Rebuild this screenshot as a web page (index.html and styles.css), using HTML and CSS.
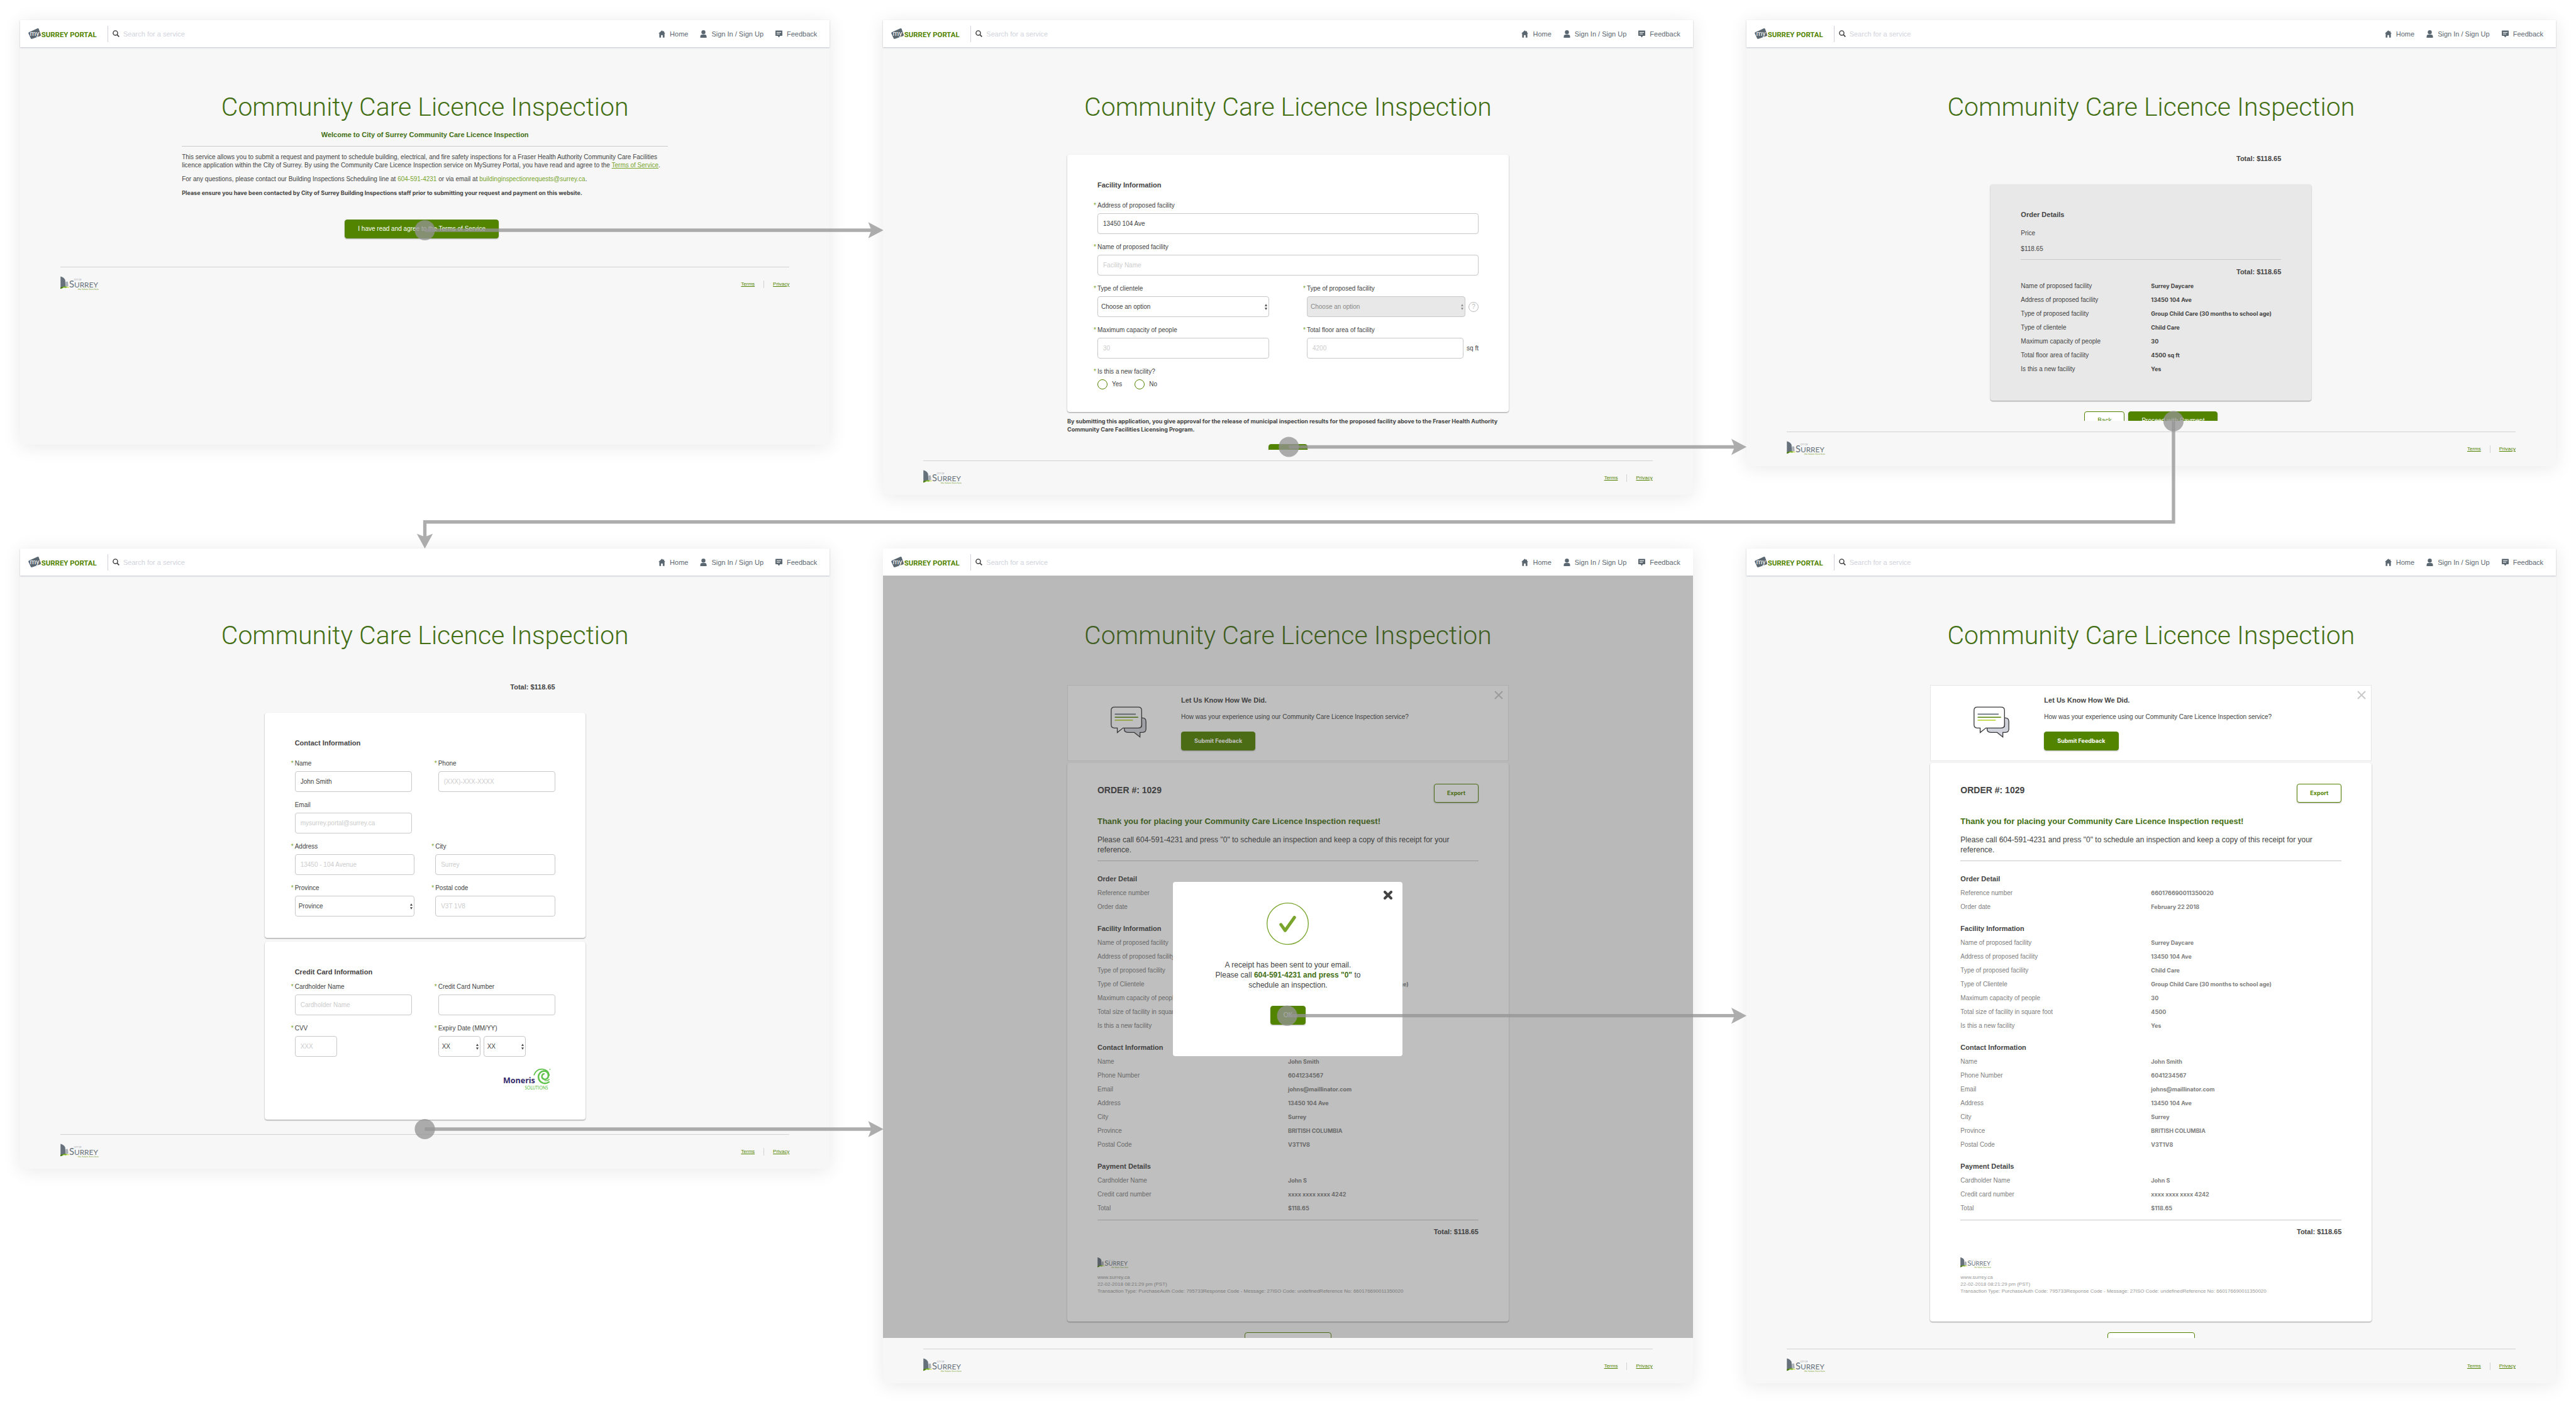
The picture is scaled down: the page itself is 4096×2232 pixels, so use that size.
FILE: index.html
```html
<!DOCTYPE html>
<html lang="en">
<head>
<meta charset="utf-8">
<title>Community Care Licence Inspection – user flow</title>
<link rel="stylesheet" href="styles.css">
</head>
<body>
<svg class="sprite" aria-hidden="true">
  <symbol id="i-portal" viewBox="0 0 492 76">
    <path fill="#5b6770" d="M7 27 64 1q8-3 11 5l14 40q2 6-4 9L27 75q-7 2-10-5L1 36q-2-6 6-9z"/>
    <text x="11" y="54" font-family="Roboto, sans-serif" font-size="50" fill="#fff">my</text>
    <text x="93" y="61" font-family="Roboto, sans-serif" font-weight="700" font-size="51" fill="#528400">SURREY PORTAL</text>
  </symbol>
  <symbol id="i-surrey" viewBox="0 0 272 104">
    <path fill="#66717b" d="M1 1q24 6 33 24l3 48-36 12z"/>
    <path fill="#aab0b5" d="M37 38h16l4 32-20 4z"/>
    <path fill="#4c7d10" d="M0 80q9-7 20-5-1 10-20 14z"/>
    <path fill="#7ab51d" d="M18 74q20-6 29 2l-8 6q-12-5-24 0z"/>
    <path fill="#c4d82e" d="M45 74q12-1 19 5-11 2-20 0z"/>
    <text x="97" y="29" font-family="Lato, sans-serif" font-size="14" fill="#9aa1a7">CITY OF</text>
    <text x="62" y="77" font-family="Lato, sans-serif" font-size="53" fill="#66717b"><tspan font-size="66">S</tspan>URREY</text>
    <text x="124" y="98" font-family="Lato, sans-serif" font-size="17" fill="#7aa52f">the future lives here.</text>
  </symbol>
  <symbol id="i-search" viewBox="0 0 16 16">
    <circle cx="6.5" cy="6.5" r="5.2" fill="none" stroke="#333" stroke-width="2"/>
    <path d="m10.5 10.5 4.5 4.5" stroke="#333" stroke-width="2.4"/>
  </symbol>
  <symbol id="i-home" viewBox="0 0 16 17"><path fill="#5b6770" d="M8 0 0 7.500h2V16q0 1 1 1h3v-5q0-1 1-1h2q1 0 1 1v5h3q1 0 1-1V7.500h2L13 4.500V2h-2v1z"/></symbol>
  <symbol id="i-user" viewBox="0 0 16 18"><circle cx="8" cy="4.800" r="4.800" fill="#5b6770"/><path fill="#5b6770" d="M.5 18v-3q0-4.500 4.500-4.500h6q4.500 0 4.500 4.500v3z"/></symbol>
  <symbol id="i-feedback" viewBox="0 0 17 17"><path fill="#5b6770" d="M1 0h15q1 0 1 1v11q0 1-1 1h-4.500l-3 4-3-4H1q-1 0-1-1V1q0-1 1-1z"/><path stroke="#fff" stroke-width="1.600" d="M3 4.500h11M3 8.500h8"/></symbol>
  <symbol id="i-updown" viewBox="0 0 6 14"><path fill="currentColor" d="M3 0 6 5H0zM3 14 0 9h6z"/></symbol>
  <symbol id="i-chat" viewBox="0 0 256 226">
    <path fill="#d0d3dc" stroke="#3a3a3a" stroke-width="6" d="M222 82q31 0 31 26v54q0 25-25 25h-18v33l-41-33h-46q-26 0-26-24v-10h106q20 0 20-21z"/>
    <path fill="#fff" stroke="#3a3a3a" stroke-width="6" d="M26 5h172q24 0 24 24v102q0 24-24 24H88l-41 33v-33H26q-23 0-23-24V29Q3 5 26 5z"/>
    <path stroke="#66717b" stroke-width="7" d="M29 56h151"/><path stroke="#528400" stroke-width="7" d="M29 78h168"/><path stroke="#b9d12b" stroke-width="7" d="M29 99h130"/>
  </symbol>
  <symbol id="i-moneris" viewBox="0 0 340 150">
    <text x="0" y="108" font-family="Open Sans, sans-serif" font-weight="700" font-size="56" fill="#342a6b">Moneris</text>
    <text x="154" y="149" font-family="Lato, sans-serif" font-size="30" fill="#5fc24a">SOLUTIONS</text>
    <g fill="none" stroke="#5fc24a" stroke-linecap="round">
      <path stroke-width="8" d="M220 47Q236 4 280 6q44 5 48 45"/>
      <path stroke-width="11" d="M326 98q-20 15-44 7-30-12-31-44 4-38 40-42 30 2 31 34-2 22-22 26-20-1-24-17-1-18 14-22"/>
      <path stroke-width="6" d="M328 80q-14 12-32 8M332 8h2"/>
    </g>
  </symbol>
</svg>

<main class="board">

  <!-- Step 1: terms -->
  <section class="screen screen-intro">
    <header class="topbar">
      <svg class="brand" role="img" aria-label="mySurrey Portal"><use href="#i-portal"/></svg>
      <div class="search"><svg><use href="#i-search"/></svg><input type="search" aria-label="Search" placeholder="Search for a service"></div>
      <nav class="nav"><a href="#"><svg><use href="#i-home"/></svg>Home</a><a href="#"><svg><use href="#i-user"/></svg>Sign In / Sign Up</a><a href="#"><svg><use href="#i-feedback"/></svg>Feedback</a></nav>
    </header>
    <div class="content">
      <h1>Community Care Licence Inspection</h1>
      <div class="intro">
        <h2>Welcome to City of Surrey Community Care Licence Inspection</h2>
        <p>This service allows you to submit a request and payment to schedule building, electrical, and fire safety inspections for a Fraser Health Authority Community Care Facilities licence application within the City of Surrey. By using the Community Care Licence Inspection service on MySurrey Portal, you have read and agree to the <a class="underlined" href="#">Terms of Service</a>.</p>
        <p>For any questions, please contact our Building Inspections Scheduling line at <a href="#">604-591-4231</a> or via email at <a href="#">buildinginspectionrequests@surrey.ca</a>.</p>
        <p><strong>Please ensure you have been contacted by City of Surrey Building Inspections staff prior to submitting your request and payment on this website.</strong></p>
      </div>
      <div class="actions actions-intro"><button class="btn" type="button">I have read and agree to the Terms of Service</button></div>
    </div>
    <footer class="foot"><svg class="city" role="img" aria-label="City of Surrey"><use href="#i-surrey"/></svg><div class="legal"><a href="#">Terms</a><a href="#">Privacy</a></div></footer>
  </section>

  <!-- Step 2: facility form -->
  <section class="screen">
    <header class="topbar">
      <svg class="brand" role="img" aria-label="mySurrey Portal"><use href="#i-portal"/></svg>
      <div class="search"><svg><use href="#i-search"/></svg><input type="search" aria-label="Search" placeholder="Search for a service"></div>
      <nav class="nav"><a href="#"><svg><use href="#i-home"/></svg>Home</a><a href="#"><svg><use href="#i-user"/></svg>Sign In / Sign Up</a><a href="#"><svg><use href="#i-feedback"/></svg>Feedback</a></nav>
    </header>
    <div class="content content-facility">
      <h1>Community Care Licence Inspection</h1>
      <form class="wide form-top">
        <div class="card card-facility">
          <h3>Facility Information</h3>
          <div class="fields">
            <div class="field span"><label class="req" for="f-address">Address of proposed facility</label><input id="f-address" type="text" value="13450 104 Ave"></div>
            <div class="field span"><label class="req" for="f-name">Name of proposed facility</label><input id="f-name" type="text" placeholder="Facility Name"></div>
            <div class="field"><label class="req" for="f-client">Type of clientele</label><div class="pick"><select id="f-client"><option>Choose an option</option></select><svg><use href="#i-updown"/></svg></div></div>
            <div class="field"><label class="req" for="f-type">Type of proposed facility</label><div class="inline"><div class="pick off"><select id="f-type" disabled><option>Choose an option</option></select><svg><use href="#i-updown"/></svg></div><button class="help" type="button">?</button></div></div>
            <div class="field"><label class="req" for="f-cap">Maximum capacity of people</label><input id="f-cap" type="text" placeholder="30"></div>
            <div class="field"><label class="req" for="f-area">Total floor area of facility</label><div class="inline"><input id="f-area" type="text" placeholder="4200"><span class="unit">sq ft</span></div></div>
            <fieldset class="field span"><legend class="req">Is this a new facility?</legend><div class="radios"><label><input type="radio" name="new">Yes</label><label><input type="radio" name="new">No</label></div></fieldset>
          </div>
        </div>
        <p class="consent">By submitting this application, you give approval for the release of municipal inspection results for the proposed facility above to the Fraser Health Authority Community Care Facilities Licensing Program.</p>
        <div class="actions"><button class="btn" type="button">Next</button></div>
      </form>
    </div>
    <footer class="foot"><svg class="city" role="img" aria-label="City of Surrey"><use href="#i-surrey"/></svg><div class="legal"><a href="#">Terms</a><a href="#">Privacy</a></div></footer>
  </section>

  <!-- Step 3: order review -->
  <section class="screen">
    <header class="topbar">
      <svg class="brand" role="img" aria-label="mySurrey Portal"><use href="#i-portal"/></svg>
      <div class="search"><svg><use href="#i-search"/></svg><input type="search" aria-label="Search" placeholder="Search for a service"></div>
      <nav class="nav"><a href="#"><svg><use href="#i-home"/></svg>Home</a><a href="#"><svg><use href="#i-user"/></svg>Sign In / Sign Up</a><a href="#"><svg><use href="#i-feedback"/></svg>Feedback</a></nav>
    </header>
    <div class="content content-review">
      <h1>Community Care Licence Inspection</h1>
      <div class="narrow">
        <p class="total total-top">Total: $118.65</p>
        <div class="card card-review">
          <h3>Order Details</h3>
          <p class="price-label">Price</p>
          <p class="price">$118.65</p>
          <p class="total total-line">Total: $118.65</p>
          <table class="facts">
            <tr><th scope="row">Name of proposed facility</th><td>Surrey Daycare</td></tr>
            <tr><th scope="row">Address of proposed facility</th><td>13450 104 Ave</td></tr>
            <tr><th scope="row">Type of proposed facility</th><td>Group Child Care (30 months to school age)</td></tr>
            <tr><th scope="row">Type of clientele</th><td>Child Care</td></tr>
            <tr><th scope="row">Maximum capacity of people</th><td>30</td></tr>
            <tr><th scope="row">Total floor area of facility</th><td>4500 sq ft</td></tr>
            <tr><th scope="row">Is this a new facility</th><td>Yes</td></tr>
          </table>
        </div>
        <div class="actions"><button class="btn btn-line plain" type="button">Back</button><button class="btn" type="button">Proceed with Payment</button></div>
      </div>
    </div>
    <footer class="foot"><svg class="city" role="img" aria-label="City of Surrey"><use href="#i-surrey"/></svg><div class="legal"><a href="#">Terms</a><a href="#">Privacy</a></div></footer>
  </section>

  <!-- Step 4: payment -->
  <section class="screen">
    <header class="topbar">
      <svg class="brand" role="img" aria-label="mySurrey Portal"><use href="#i-portal"/></svg>
      <div class="search"><svg><use href="#i-search"/></svg><input type="search" aria-label="Search" placeholder="Search for a service"></div>
      <nav class="nav"><a href="#"><svg><use href="#i-home"/></svg>Home</a><a href="#"><svg><use href="#i-user"/></svg>Sign In / Sign Up</a><a href="#"><svg><use href="#i-feedback"/></svg>Feedback</a></nav>
    </header>
    <div class="content content-payment">
      <h1>Community Care Licence Inspection</h1>
      <form class="narrow">
        <p class="total total-top">Total: $118.65</p>
        <div class="card card-contact">
          <h3>Contact Information</h3>
          <div class="fields gap-m">
            <div class="field"><label class="req" for="p-name">Name</label><input id="p-name" type="text" value="John Smith"></div>
            <div class="field"><label class="req" for="p-phone">Phone</label><input id="p-phone" type="tel" placeholder="(XXX)-XXX-XXXX"></div>
            <div class="field"><label for="p-email">Email</label><input id="p-email" type="email" placeholder="mysurrey.portal@surrey.ca"></div>
          </div>
          <div class="fields gap-s">
            <div class="field"><label class="req" for="p-addr">Address</label><input id="p-addr" type="text" placeholder="13450 - 104 Avenue"></div>
            <div class="field"><label class="req" for="p-city">City</label><input id="p-city" type="text" placeholder="Surrey"></div>
            <div class="field"><label class="req" for="p-prov">Province</label><div class="pick"><select id="p-prov"><option>Province</option></select><svg><use href="#i-updown"/></svg></div></div>
            <div class="field"><label class="req" for="p-post">Postal code</label><input id="p-post" type="text" placeholder="V3T 1V8"></div>
          </div>
        </div>
        <div class="card card-credit">
          <h3>Credit Card Information</h3>
          <div class="fields gap-m">
            <div class="field"><label class="req" for="c-name">Cardholder Name</label><input id="c-name" type="text" placeholder="Cardholder Name"></div>
            <div class="field"><label class="req" for="c-num">Credit Card Number</label><input id="c-num" type="text"></div>
            <div class="field"><label class="req" for="c-cvv">CVV</label><input class="short" id="c-cvv" type="text" placeholder="XXX"></div>
            <div class="field"><label class="req" for="c-month">Expiry Date (MM/YY)</label><div class="inline"><div class="pick short"><select id="c-month"><option>XX</option></select><svg><use href="#i-updown"/></svg></div><div class="pick short"><select aria-label="Expiry year"><option>XX</option></select><svg><use href="#i-updown"/></svg></div></div></div>
          </div>
          <svg class="moneris" role="img" aria-label="Moneris Solutions"><use href="#i-moneris"/></svg>
        </div>
      </form>
    </div>
    <footer class="foot"><svg class="city" role="img" aria-label="City of Surrey"><use href="#i-surrey"/></svg><div class="legal"><a href="#">Terms</a><a href="#">Privacy</a></div></footer>
  </section>

  <!-- Step 5: receipt with confirmation dialog -->
  <section class="screen">
    <header class="topbar flat">
      <svg class="brand" role="img" aria-label="mySurrey Portal"><use href="#i-portal"/></svg>
      <div class="search"><svg><use href="#i-search"/></svg><input type="search" aria-label="Search" placeholder="Search for a service"></div>
      <nav class="nav"><a href="#"><svg><use href="#i-home"/></svg>Home</a><a href="#"><svg><use href="#i-user"/></svg>Sign In / Sign Up</a><a href="#"><svg><use href="#i-feedback"/></svg>Feedback</a></nav>
    </header>
    <div class="content content-receipt">
      <h1>Community Care Licence Inspection</h1>
      <div class="wide">
        <aside class="banner">
          <svg class="chat"><use href="#i-chat"/></svg>
          <div><h3>Let Us Know How We Did.</h3><p>How was your experience using our Community Care Licence Inspection service?</p><button class="btn strong" type="button">Submit Feedback</button></div>
          <button class="dismiss" type="button" aria-label="Close"><svg viewBox="0 0 14 14"><path stroke="#c9c9c9" stroke-width="2" d="m1 1 12 12M13 1 1 13"/></svg></button>
        </aside>
        <article class="card receipt">
          <div class="receipt-head"><h2>ORDER #: 1029</h2><button class="btn btn-line strong" type="button">Export</button></div>
          <p class="thanks">Thank you for placing your Community Care Licence Inspection request!</p>
          <p class="note">Please call 604-591-4231 and press "0" to schedule an inspection and keep a copy of this receipt for your reference.</p>
          <h3>Order Detail</h3>
          <table class="facts soft"><tr><th scope="row">Reference number</th><td>660176690011350020</td></tr><tr><th scope="row">Order date</th><td>February 22 2018</td></tr></table>
          <h3>Facility Information</h3>
          <table class="facts soft"><tr><th scope="row">Name of proposed facility</th><td>Surrey Daycare</td></tr><tr><th scope="row">Address of proposed facility</th><td>13450 104 Ave</td></tr><tr><th scope="row">Type of proposed facility</th><td>Child Care</td></tr><tr><th scope="row">Type of Clientele</th><td>Group Child Care (30 months to school age)</td></tr><tr><th scope="row">Maximum capacity of people</th><td>30</td></tr><tr><th scope="row">Total size of facility in square foot</th><td>4500</td></tr><tr><th scope="row">Is this a new facility</th><td>Yes</td></tr></table>
          <h3>Contact Information</h3>
          <table class="facts soft"><tr><th scope="row">Name</th><td>John Smith</td></tr><tr><th scope="row">Phone Number</th><td>6041234567</td></tr><tr><th scope="row">Email</th><td>johns@maillinator.com</td></tr><tr><th scope="row">Address</th><td>13450 104 Ave</td></tr><tr><th scope="row">City</th><td>Surrey</td></tr><tr><th scope="row">Province</th><td>BRITISH COLUMBIA</td></tr><tr><th scope="row">Postal Code</th><td>V3T1V8</td></tr></table>
          <h3>Payment Details</h3>
          <table class="facts soft"><tr><th scope="row">Cardholder Name</th><td>John S</td></tr><tr><th scope="row">Credit card number</th><td>xxxx xxxx xxxx 4242</td></tr><tr><th scope="row">Total</th><td>$118.65</td></tr></table>
          <p class="total total-line">Total: $118.65</p>
          <svg class="city city-small" role="img" aria-label="City of Surrey"><use href="#i-surrey"/></svg>
          <p class="trace">www.surrey.ca<br>22-02-2018 08:21:29 pm (PST)<br>Transaction Type: PurchaseAuth Code: 795733Response Code - Message: 27ISO Code: undefinedReference No: 660176690011350020</p>
        </article>
        <div class="actions"><button class="btn btn-line plain" type="button">Return to Home Page</button></div>
      </div>
      <div class="scrim"></div>
      <div class="dialog" role="dialog" aria-label="Receipt sent">
        <button class="dialog-close" type="button" aria-label="Close"><svg viewBox="0 0 14 14"><path stroke="#444" stroke-width="4" stroke-linecap="round" d="m2 2 10 10M12 2 2 12"/></svg></button>
        <svg class="tick" viewBox="0 0 100 100"><circle cx="50" cy="50" r="49" fill="none" stroke="#79a52d" stroke-width="2"/><path fill="none" stroke="#79a52d" stroke-width="7.500" stroke-linecap="round" stroke-linejoin="round" d="m34 52 10 14 22-31"/></svg>
        <p>A receipt has been sent to your email.<br>Please call <strong>604-591-4231 and press "0"</strong> to<br>schedule an inspection.</p>
        <button class="btn" type="button">OK</button>
      </div>
    </div>
    <footer class="foot"><svg class="city" role="img" aria-label="City of Surrey"><use href="#i-surrey"/></svg><div class="legal"><a href="#">Terms</a><a href="#">Privacy</a></div></footer>
  </section>

  <!-- Step 6: receipt -->
  <section class="screen">
    <header class="topbar">
      <svg class="brand" role="img" aria-label="mySurrey Portal"><use href="#i-portal"/></svg>
      <div class="search"><svg><use href="#i-search"/></svg><input type="search" aria-label="Search" placeholder="Search for a service"></div>
      <nav class="nav"><a href="#"><svg><use href="#i-home"/></svg>Home</a><a href="#"><svg><use href="#i-user"/></svg>Sign In / Sign Up</a><a href="#"><svg><use href="#i-feedback"/></svg>Feedback</a></nav>
    </header>
    <div class="content content-receipt">
      <h1>Community Care Licence Inspection</h1>
      <div class="wide">
        <aside class="banner">
          <svg class="chat"><use href="#i-chat"/></svg>
          <div><h3>Let Us Know How We Did.</h3><p>How was your experience using our Community Care Licence Inspection service?</p><button class="btn strong" type="button">Submit Feedback</button></div>
          <button class="dismiss" type="button" aria-label="Close"><svg viewBox="0 0 14 14"><path stroke="#c9c9c9" stroke-width="2" d="m1 1 12 12M13 1 1 13"/></svg></button>
        </aside>
        <article class="card receipt">
          <div class="receipt-head"><h2>ORDER #: 1029</h2><button class="btn btn-line strong" type="button">Export</button></div>
          <p class="thanks">Thank you for placing your Community Care Licence Inspection request!</p>
          <p class="note">Please call 604-591-4231 and press "0" to schedule an inspection and keep a copy of this receipt for your reference.</p>
          <h3>Order Detail</h3>
          <table class="facts soft"><tr><th scope="row">Reference number</th><td>660176690011350020</td></tr><tr><th scope="row">Order date</th><td>February 22 2018</td></tr></table>
          <h3>Facility Information</h3>
          <table class="facts soft"><tr><th scope="row">Name of proposed facility</th><td>Surrey Daycare</td></tr><tr><th scope="row">Address of proposed facility</th><td>13450 104 Ave</td></tr><tr><th scope="row">Type of proposed facility</th><td>Child Care</td></tr><tr><th scope="row">Type of Clientele</th><td>Group Child Care (30 months to school age)</td></tr><tr><th scope="row">Maximum capacity of people</th><td>30</td></tr><tr><th scope="row">Total size of facility in square foot</th><td>4500</td></tr><tr><th scope="row">Is this a new facility</th><td>Yes</td></tr></table>
          <h3>Contact Information</h3>
          <table class="facts soft"><tr><th scope="row">Name</th><td>John Smith</td></tr><tr><th scope="row">Phone Number</th><td>6041234567</td></tr><tr><th scope="row">Email</th><td>johns@maillinator.com</td></tr><tr><th scope="row">Address</th><td>13450 104 Ave</td></tr><tr><th scope="row">City</th><td>Surrey</td></tr><tr><th scope="row">Province</th><td>BRITISH COLUMBIA</td></tr><tr><th scope="row">Postal Code</th><td>V3T1V8</td></tr></table>
          <h3>Payment Details</h3>
          <table class="facts soft"><tr><th scope="row">Cardholder Name</th><td>John S</td></tr><tr><th scope="row">Credit card number</th><td>xxxx xxxx xxxx 4242</td></tr><tr><th scope="row">Total</th><td>$118.65</td></tr></table>
          <p class="total total-line">Total: $118.65</p>
          <svg class="city city-small" role="img" aria-label="City of Surrey"><use href="#i-surrey"/></svg>
          <p class="trace">www.surrey.ca<br>22-02-2018 08:21:29 pm (PST)<br>Transaction Type: PurchaseAuth Code: 795733Response Code - Message: 27ISO Code: undefinedReference No: 660176690011350020</p>
        </article>
        <div class="actions"><button class="btn btn-line plain" type="button">Return to Home Page</button></div>
      </div>
    </div>
    <footer class="foot"><svg class="city" role="img" aria-label="City of Surrey"><use href="#i-surrey"/></svg><div class="legal"><a href="#">Terms</a><a href="#">Privacy</a></div></footer>
  </section>

  <!-- Connectors between the steps -->
  <svg class="flow" viewBox="0 0 6112 3330" preserveAspectRatio="none" aria-hidden="true">
    <g class="hot"><circle cx="1008" cy="546" r="24"/><circle cx="3058" cy="1060" r="24"/><circle cx="5157" cy="999" r="24"/><circle cx="1008" cy="2678" r="24"/><circle cx="3054" cy="2409" r="24"/></g>
    <g class="wire">
      <path d="M1008 542H2066L2060 527 2096 546 2060 565 2066 550H1008z"/>
      <path d="M3058 1056H4114L4108 1041 4144 1060 4108 1079 4114 1064H3058z"/>
      <path d="M5153 999h8v243H1012v30l15-6-19 35-19-35 15 6v-38H5153z"/>
      <path d="M1008 2674H2066L2060 2659 2096 2678 2060 2697 2066 2682H1008z"/>
      <path d="M3054 2405H4114L4108 2390 4144 2409 4108 2428 4114 2413H3054z"/>
    </g>
  </svg>
</main>
</body>
</html>
```
FILE: styles.css
```css
* { box-sizing: border-box; }

body {
  margin: 0;
  background: #fff;
  color: #444;
  font: 10px/14px "Liberation Sans", Arial, sans-serif;
}

h1, h2, h3, p, fieldset, legend { margin: 0; padding: 0; border: 0; }
button, input, select { font: inherit; color: inherit; }
svg { display: block; }
.sprite { position: absolute; width: 0; height: 0; }

.board {
  position: relative;
  display: grid;
  grid-template-columns: repeat(3, minmax(0, 1fr));
  gap: 85px;
  align-items: start;
  padding: 32px 32px 33px;
}

.screen {
  background: #f7f7f7;
  box-shadow: 0 3px 28px rgba(0, 0, 0, .09);
}
.screen-intro { min-height: 675px; }

/* Top bar */
.topbar {
  position: relative;
  display: flex;
  align-items: center;
  height: 43px;
  padding: 0 20px 0 13px;
  background: #fff;
  box-shadow: 0 1px 2px #bfc3c9;
}
.topbar.flat { box-shadow: none; }
.brand { width: 110px; height: 17px; margin-right: 16px; overflow: visible; }
.search {
  display: flex;
  align-items: center;
  flex: 1;
  gap: 6px;
  height: 26px;
  padding-left: 7px;
  border-left: 1px solid #d0d3dc;
}
.search svg { width: 11px; height: 11px; }
.search input {
  flex: 1;
  min-width: 0;
  padding: 0;
  border: 0;
  background: none;
  font-size: 11px;
}
.search input::placeholder { color: #d0d3dc; opacity: 1; }
.nav { display: flex; gap: 19px; }
.nav a {
  display: flex;
  align-items: center;
  gap: 7px;
  color: #5b6770;
  font-size: 11px;
  text-decoration: none;
}
.nav svg { width: 11px; height: 12px; }

/* Page body */
.content { position: relative; padding-top: 70px; overflow: hidden; }
.content-facility { max-height: 640px; }
.content-review { max-height: 594px; }
.content-payment { padding-bottom: 6px; }
.content-receipt { max-height: 1212px; }

h1 {
  color: #436f14;
  font: 300 41px/50px Roboto, "Liberation Sans", sans-serif;
  text-align: center;
}
h3 { font-size: 11px; line-height: 14px; }

.wide { max-width: 702px; margin: 0 auto; }
.narrow { max-width: 510px; margin: 0 auto; }
.form-top { margin-top: 51px; }

.intro { max-width: 773px; margin: 12px auto 0; font-size: 10px; line-height: 13px; }
.intro h2 {
  margin-bottom: 10px;
  padding-bottom: 11px;
  border-bottom: 1px solid #ccc;
  color: #436f14;
  font-size: 11px;
  line-height: 14px;
  text-align: center;
}
.intro p + p { margin-top: 9px; }
.intro a { color: #79a52d; text-decoration: none; }
.intro .underlined { text-decoration: underline; }
.intro strong, .consent, .facts td, .btn.strong { font-family: Inter, "Liberation Sans", sans-serif; font-size: 9px; font-weight: 700; }

/* Buttons */
.actions { display: flex; justify-content: center; gap: 6px; margin-top: 17px; }
.actions-intro { margin-top: 36px; padding: 0 10px 28px 0; }
.btn {
  height: 30px;
  padding: 0 20px;
  border: 1px solid #528400;
  border-radius: 4px;
  background: #528400;
  box-shadow: 0 1px 2px rgba(0, 0, 0, .3);
  color: #fff;
  font-size: 10px;
  line-height: 14px;
  white-space: nowrap;
}
.btn-line { background: #fff; color: #528400; }
.btn-line.plain { box-shadow: none; }

/* Cards */
.card {
  padding: 41px 48px 0;
  border-radius: 4px;
  background: #fff;
  box-shadow: 0 1px 2px rgba(0, 0, 0, .4);
}
.card-facility { padding-bottom: 36px; }
.card-contact { padding-bottom: 34px; }
.card-credit { margin-top: 6px; padding-bottom: 48px; }
.card-review { padding-bottom: 39px; background: #e8e8e8; }

/* Form fields */
.fields {
  display: grid;
  grid-template-columns: repeat(2, minmax(0, 1fr));
  gap: 14px 60px;
  margin-top: 19px;
}
.gap-m { column-gap: 42px; }
.gap-s { column-gap: 33px; margin-top: 14px; }
.card-credit .fields { margin-top: 10px; }
.field { display: flex; flex-direction: column; gap: 5px; min-width: 0; }
fieldset.field { display: block; }
.span { grid-column: 1 / -1; }
.field label, .field legend { display: block; height: 14px; }
.req { position: relative; }
.req::before {
  content: "*";
  position: absolute;
  left: -6px;
  color: #79a52d;
}
.field input[type="text"], .field input[type="tel"], .field input[type="email"], .pick select {
  width: 100%;
  height: 33px;
  padding: 0 8px;
  border: 1px solid #c8c8c8;
  border-radius: 4px;
  background: #fff;
  font-size: 10px;
}
.field input::placeholder { color: #ccc; opacity: 1; }
.pick { position: relative; flex: 1; }
.pick select { display: block; padding: 0 5px; appearance: none; }
.pick svg { position: absolute; right: 3px; top: 12px; width: 4px; height: 10px; color: #444; }
.pick.off select { background: #e8e8e8; color: #888; opacity: 1; }
.pick.off svg { color: #888; }
.inline { display: flex; align-items: center; gap: 5px; }
.unit { flex: none; }
.field input.short, .pick.short { flex: none; width: 67px; height: 33px; }
.help {
  width: 16px;
  height: 16px;
  padding: 0;
  border: 1px solid #bbb;
  border-radius: 50%;
  background: none;
  color: #bbb;
  font-size: 10px;
  line-height: 14px;
}
.radios { display: flex; gap: 20px; padding-top: 5px; }
.field .radios label { display: flex; align-items: center; gap: 7px; height: 16px; }
.radios input {
  width: 16px;
  height: 16px;
  margin: 0;
  border: 1px solid #528400;
  border-radius: 50%;
  background: #fff;
  appearance: none;
}
.consent { margin-top: 8px; line-height: 13px; }
.moneris { width: 76px; height: 34px; margin: 18px 7px 0 auto; overflow: visible; }

/* Order summary */
.total { font-size: 11px; font-weight: 700; line-height: 14px; text-align: right; }
.total-top { margin: 50px 48px 34px; }
.price-label { margin-top: 16px; }
.price { margin-top: 11px; }
.total-line { margin-top: 9px; padding-top: 12px; border-top: 1px solid #c8c8c8; }
.receipt .total-line { margin-top: 7px; padding-top: 11px; }
.facts { width: 100%; border-collapse: collapse; table-layout: fixed; }
.facts th, .facts td { height: 22px; padding: 0; text-align: left; white-space: nowrap; }
.facts th { font-weight: 400; }
.card-review .facts { margin-top: 5px; }
.facts.soft { margin-top: 5px; color: #808080; }

/* Feedback banner */
.banner {
  position: relative;
  display: grid;
  grid-template-columns: 180px 1fr;
  height: 121px;
  margin: 54px 0 3px;
  padding-top: 16px;
  border: 1px solid #e6e6e6;
  background: #fff;
}
.banner p { margin: 13px 0 16px; }
.chat { width: 57px; height: 50px; margin: 17px 0 0 68px; }
.dismiss, .dialog-close {
  position: absolute;
  width: 14px;
  height: 14px;
  padding: 0;
  border: 0;
  background: none;
}
.dismiss { top: 8px; right: 8px; }

/* Receipt */
.receipt { padding: 33px 48px 43px; }
.receipt-head { display: flex; justify-content: space-between; align-items: flex-start; }
.receipt-head h2 { font-size: 14px; line-height: 20px; }
.thanks { margin-top: 22px; color: #436f14; font-size: 13px; font-weight: 700; line-height: 16px; }
.note {
  margin: 13px 0 21px;
  padding-bottom: 9px;
  border-bottom: 1px solid #c8c8c8;
  font-size: 12px;
  line-height: 16px;
}
.facts + h3 { margin-top: 16px; }
.trace { margin-top: 7px; color: #999; font-size: 8px; line-height: 11px; }

/* Confirmation dialog */
.scrim { position: absolute; inset: 0; background: rgba(60, 60, 60, .33); }
.dialog {
  position: absolute;
  top: 487px;
  left: 0;
  right: 0;
  display: flex;
  flex-direction: column;
  align-items: center;
  width: 365px;
  margin: 0 auto;
  padding: 33px 0 50px;
  border-radius: 4px;
  background: #fff;
  font-size: 12px;
  line-height: 16px;
  text-align: center;
}
.dialog p { margin: 24px 0 25px; }
.dialog strong { color: #436f14; }
.dialog-close { top: 14px; right: 16px; }
.tick { width: 67px; height: 67px; }

/* Footer */
.foot {
  display: flex;
  flex-wrap: wrap;
  align-content: flex-start;
  justify-content: space-between;
  height: 72px;
  padding: 17px 64px 0;
}
.foot::before { content: ""; flex: 0 0 100%; height: 1px; background: #d0d3d6; }
.city { width: 61px; height: 24px; margin-top: 14px; overflow: visible; }
.city-small { width: 49px; height: 20px; margin-top: 33px; }
.legal { display: flex; align-items: center; margin-top: 21px; height: 12px; font-size: 8px; line-height: 12px; }
.legal a { color: #528400; }
.legal a + a { margin-left: 14px; padding-left: 14px; border-left: 1px solid #d0d3d6; }

/* Connectors */
.flow { position: absolute; inset: 0; width: 100%; height: 100%; pointer-events: none; }
.hot circle, .wire path { fill: rgba(148, 148, 148, .77); }
```
